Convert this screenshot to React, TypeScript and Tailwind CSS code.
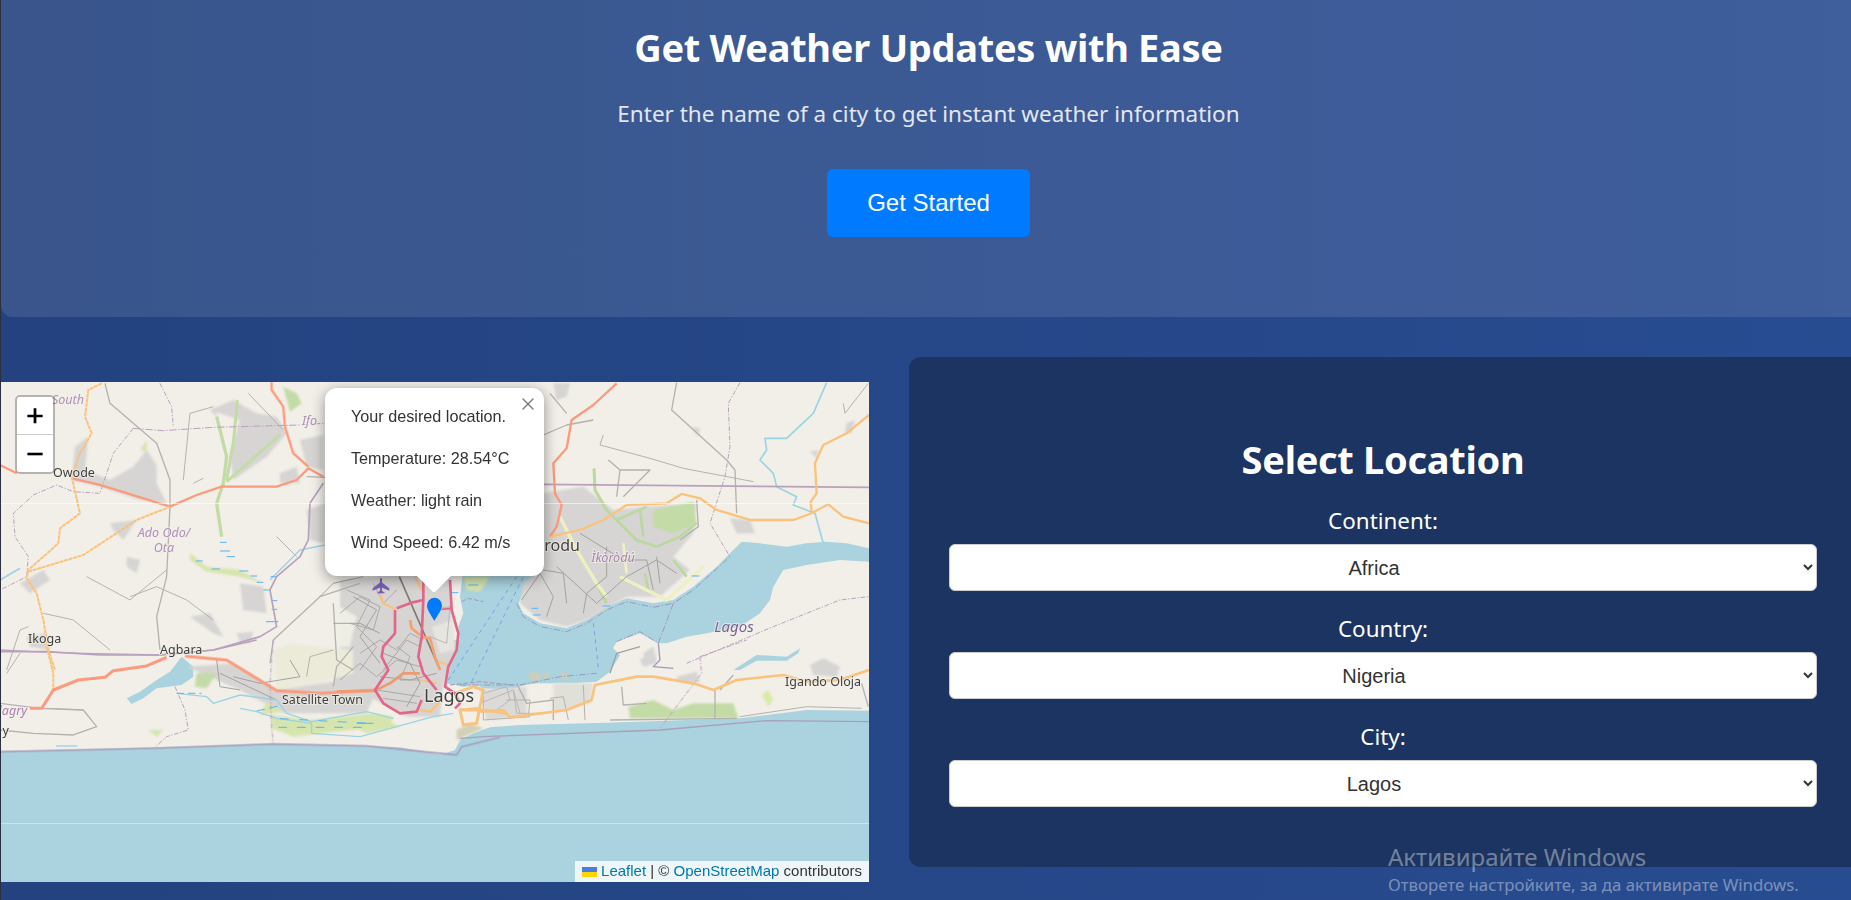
import React from 'react';
import { X } from 'lucide-react';

// map pieces were traced on 3x crops, so each tile has its own origin
const tiles = {
  a: 'translate(0 370) scale(0.3333)',
  b: 'translate(440 370) scale(0.3333)',
  c: 'translate(0 640) scale(0.3333)',
  d: 'translate(440 640) scale(0.3333)',
  e: 'translate(340 570) scale(0.3333)',
};

type Shape = {
  t: keyof typeof tiles;
  p: string;
  fill?: string;
  stroke?: string;
  w?: number;
  dash?: string;
};

const WATER = '#aad3df';
const GREY = '#d6d5d3';
const GREEN = '#c3dba6';
const MARSH = '#d5e5ad';
const PALE = '#eef0c4';
const TRUNK = '#fb9a7c';
const SECOND = '#f9c27d';
const MOTOR = '#e2668a';
const BOUND = '#b9a0bd';
const ROAD = '#b4b2ae';
const ROAD2 = '#a3a19e';
const RIVER = '#9cd3e3';
const CREEK = '#58b2f5';

const water: Shape[] = [
  { t: 'c', p: '0,335 460,322 820,312 1100,318 1200,322 1330,345 1365,345 1380,310 1500,270 1500,780 0,780', fill: WATER },
  { t: 'd', p: '45,330 60,300 100,280 150,262 240,255 500,248 900,235 1100,210 1287,212 1287,780 0,780 0,345', fill: WATER },
  { t: 'e', p: '370,0 360,80 370,130 355,170 360,220 330,290 320,340 370,350 420,345 520,350 720,320 720,185 700,190 630,170 560,150 530,110 560,50 600,0', fill: WATER },
  { t: 'b', p: '230,690 250,730 300,760 380,775 440,750 500,710 560,685 640,700 700,690 760,650 830,590 870,550 905,515 960,520 1040,530 1100,520 1160,515 1220,520 1287,535 1287,575 1200,570 1100,585 1030,600 1000,650 990,690 960,730 900,770 800,790 740,800 680,820 655,820 600,790 530,815 510,850 510,905 200,905', fill: WATER },
  { t: 'd', p: '0,0 500,0 515,20 540,45 510,95 470,125 400,130 330,130 270,130 210,150 130,145 60,110 40,80 0,90', fill: WATER },
  { t: 'c', p: '380,175 420,155 470,120 510,95 545,50 580,80 580,110 545,135 470,145 430,175 395,192', fill: WATER },
  { t: 'd', p: '880,90 950,45 1040,50 1080,25 1075,40 1040,62 950,62 900,90', fill: WATER },
];

// soft patches, drawn blurred
const areas: Shape[] = [
  { t: 'a', p: '215,330 225,230 265,200 255,300 330,330 400,290 440,240 470,285 470,340 500,400 420,390 300,350', fill: GREY },
  { t: 'a', p: '630,120 700,90 770,130 830,140 860,190 800,260 700,330 690,250 720,150', fill: GREY },
  { t: 'a', p: '330,460 410,450 370,510 340,480', fill: GREY },
  { t: 'a', p: '380,560 420,570 410,610 380,590', fill: GREY },
  { t: 'a', p: '60,640 130,600 150,630 90,670', fill: GREY },
  { t: 'a', p: '80,800 140,790 150,840 90,830', fill: GREY },
  { t: 'a', p: '720,640 790,650 800,730 730,720', fill: GREY },
  { t: 'a', p: '570,740 630,730 670,800 640,790', fill: GREY },
  { t: 'a', p: '900,210 970,195 970,300 920,290', fill: GREY },
  { t: 'a', p: '840,310 890,290 900,340 840,340', fill: GREY },
  { t: 'a', p: '920,420 975,400 975,520 930,510', fill: GREY },
  { t: 'a', p: '710,790 760,785 750,820 720,815', fill: GREY },
  { t: 'a', p: '630,120 650,110 650,140', fill: GREY },
  { t: 'e', p: '0,30 100,20 160,0 330,0 335,180 350,240 310,340 300,440 200,440 50,360 0,300', fill: GREY },
  { t: 'e', p: '0,110 50,140 30,230 0,230', fill: '#efeee5' },
  { t: 'e', p: '275,170 340,150 345,240 300,250', fill: '#e6e5e0' },
  { t: 'b', p: '310,370 430,350 520,420 620,410 770,400 760,490 700,560 750,600 660,680 560,680 440,750 380,770 300,750 240,700 250,640 310,590', fill: GREY },
  { t: 'b', p: '870,445 930,450 945,490 890,490', fill: GREY },
  { t: 'b', p: '1110,245 1135,240 1130,265', fill: GREY },
  { t: 'b', p: '1220,160 1245,150 1235,190 1215,185', fill: GREY },
  { t: 'b', p: '755,170 780,175 775,200', fill: GREY },
  { t: 'b', p: '340,40 390,40 380,80 350,90', fill: GREY },
  { t: 'b', p: '610,850 640,830 650,870 620,885', fill: GREY },
  { t: 'c', p: '560,80 700,70 830,150 1100,110 1130,150 1100,220 850,220 720,150', fill: GREY },
  { t: 'c', p: '1000,110 1130,100 1130,150 1010,155', fill: GREY },
  { t: 'c', p: '820,30 870,10 1060,30 1060,100 950,130 830,150', fill: '#ecebd9' },
  { t: 'c', p: '1060,20 1140,0 1130,130 1060,110', fill: GREY },
  { t: 'd', p: '600,60 640,30 650,70 610,80', fill: GREY },
  { t: 'd', p: '710,110 770,95 780,130 715,125', fill: GREY },
  { t: 'd', p: '1110,75 1150,55 1200,80 1190,110 1120,105', fill: GREY },
  { t: 'd', p: '50,300 130,265 90,250 50,270', fill: '#d3d0b8' },
  { t: 'd', p: '120,150 260,140 260,230 140,240', fill: '#dcdad6' },
  { t: 'd', p: '340,130 460,130 450,190 340,220', fill: '#e1e0d8' },
  { t: 'd', p: '270,95 300,100 300,122 270,122', fill: '#cfcdb8' },
  { t: 'd', p: '310,100 330,100 325,116 312,116', fill: '#cfcdb8' },
  { t: 'd', p: '360,100 385,100 385,116 360,116', fill: '#cfcdb8' },

  { t: 'a', p: '850,50 890,70 905,100 870,125', fill: GREEN },
  { t: 'a', p: '570,550 620,590 720,600 790,640 720,620 620,605 570,570', fill: MARSH },
  { t: 'a', p: '420,240 440,210 440,245', fill: MARSH },
  { t: 'b', p: '640,420 760,395 770,460 700,490 640,470', fill: GREEN },
  { t: 'c', p: '590,100 650,100 620,145 585,140', fill: GREEN },
  { t: 'c', p: '800,185 850,215 780,225', fill: MARSH },
  { t: 'c', p: '815,225 930,240 1120,220 1180,230 1170,260 1000,275 880,290 815,265', fill: MARSH },
  { t: 'c', p: '445,270 490,270 470,290', fill: MARSH },
  { t: 'd', p: '565,200 640,180 700,210 760,190 880,190 895,235 570,235', fill: GREEN },
  { t: 'd', p: '965,165 985,150 1000,180 985,200', fill: '#d9eaa9' },
  { t: 'e', p: '370,20 450,20 420,65 380,60', fill: MARSH },
  { t: 'e', p: '20,460 120,440 180,470 80,490', fill: MARSH },
];

const lines: Shape[] = [
  // green strands
  { t: 'a', p: '650,140 680,260 670,340 650,400 665,500', stroke: GREEN, w: 10 },
  { t: 'a', p: '712,90 700,220 680,330', stroke: GREEN, w: 9 },
  { t: 'a', p: '840,195 680,335', stroke: GREEN, w: 9 },
  { t: 'b', p: '462,295 465,360 500,420 530,450 590,510 650,530', stroke: '#bcd8a0', w: 9 },
  { t: 'b', p: '530,450 620,410', stroke: '#bcd8a0', w: 8 },
  { t: 'b', p: '600,420 610,500', stroke: '#bcd8a0', w: 8 },
  { t: 'b', p: '650,530 720,500 770,460', stroke: '#bcd8a0', w: 8 },
  { t: 'b', p: '470,640 500,700', stroke: '#bcd8a0', w: 10 },
  { t: 'b', p: '615,610 625,660', stroke: '#bcd8a0', w: 8 },
  { t: 'b', p: '700,570 740,620', stroke: '#bcd8a0', w: 8 },
  { t: 'b', p: '360,440 410,540 470,640 500,680', stroke: PALE, w: 10 },
  { t: 'b', p: '540,620 600,650 680,690 790,590', stroke: PALE, w: 10 },
  { t: 'b', p: '550,520 560,610', stroke: PALE, w: 8 },

  // small roads
  { t: 'a', p: '315,40 330,100 470,220 510,330 510,410 500,620 470,740 480,840', stroke: ROAD, w: 4 },
  { t: 'a', p: '260,620 390,690 500,600', stroke: ROAD, w: 3 },
  { t: 'a', p: '810,880 820,810 960,680 1080,640', stroke: ROAD, w: 4 },
  { t: 'a', p: '550,330 570,130 640,110', stroke: ROAD, w: 3 },
  { t: 'a', p: '1000,700 1010,870 1060,900', stroke: ROAD, w: 4 },
  { t: 'a', p: '920,320 975,322', stroke: ROAD, w: 4 },
  { t: 'a', p: '580,340 610,325', stroke: ROAD, w: 3 },
  { t: 'a', p: '745,70 850,180', stroke: ROAD, w: 3 },
  { t: 'a', p: '830,500 890,560', stroke: ROAD, w: 3 },
  { t: 'a', p: '390,680 470,650 560,690 640,750', stroke: ROAD, w: 3 },
  { t: 'a', p: '130,730 220,750 330,840', stroke: ROAD, w: 3 },
  { t: 'a', p: '20,900 60,780 85,770', stroke: ROAD, w: 3 },
  { t: 'a', p: '960,680 1000,640 1090,620', stroke: ROAD2, w: 3 },
  { t: 'a', p: '1060,680 1130,720 1080,800 1140,880', stroke: ROAD2, w: 3 },
  { t: 'a', p: '1000,760 1080,760 1140,790', stroke: ROAD2, w: 3 },
  { t: 'b', p: '710,38 695,120 860,270 885,300 890,430', stroke: ROAD, w: 4 },
  { t: 'b', p: '480,225 630,265 730,295 940,335', stroke: ROAD, w: 3 },
  { t: 'b', p: '480,225 490,195', stroke: ROAD, w: 3 },
  { t: 'b', p: '310,195 380,165 460,150', stroke: ROAD, w: 4 },
  { t: 'b', p: '505,270 540,300 530,380', stroke: ROAD, w: 4 },
  { t: 'b', p: '540,300 630,300 550,380', stroke: ROAD, w: 4 },
  { t: 'b', p: '770,390 775,470 720,510', stroke: ROAD, w: 4 },
  { t: 'b', p: '350,590 470,700 560,620 650,570 710,610', stroke: ROAD2, w: 3 },
  { t: 'b', p: '420,490 550,570 620,570 640,660', stroke: ROAD2, w: 3 },
  { t: 'b', p: '330,70 380,130', stroke: ROAD, w: 4 },
  { t: 'b', p: '1210,100 1215,130 1285,40', stroke: ROAD, w: 3 },
  { t: 'b', p: '310,600 370,610 380,700', stroke: ROAD2, w: 3 },
  { t: 'b', p: '245,690 300,610 340,680 320,740', stroke: ROAD2, w: 3 },
  { t: 'b', p: '500,530 500,620 440,670 430,730', stroke: ROAD2, w: 3 },
  { t: 'b', p: '650,560 660,640', stroke: ROAD2, w: 3 },
  { t: 'c', p: '0,190 120,205 250,210 290,260 220,285 100,280 0,270', stroke: ROAD, w: 4 },
  { t: 'c', p: '650,60 660,140 720,150', stroke: ROAD2, w: 3 },
  { t: 'c', p: '1060,20 1010,80 1000,140', stroke: ROAD, w: 4 },
  { t: 'c', p: '20,100 60,40', stroke: ROAD, w: 3 },
  { t: 'c', p: '250,210 140,205', stroke: ROAD, w: 3 },
  { t: 'c', p: '700,110 780,130 900,110 870,60', stroke: ROAD2, w: 3 },
  { t: 'c', p: '920,110 930,50 1000,30', stroke: ROAD, w: 3 },
  { t: 'c', p: '660,100 830,180', stroke: ROAD2, w: 3 },
  { t: 'c', p: '1140,110 1230,120 1310,100', stroke: ROAD2, w: 3 },
  { t: 'c', p: '1150,40 1230,70 1260,130 1220,200', stroke: ROAD2, w: 3 },
  { t: 'd', p: '510,240 890,235', stroke: ROAD, w: 4 },
  { t: 'd', p: '825,150 825,235', stroke: ROAD, w: 4 },
  { t: 'd', p: '545,140 550,195 620,190', stroke: ROAD, w: 4 },
  { t: 'd', p: '1265,130 1285,200', stroke: ROAD, w: 4 },
  { t: 'd', p: '840,150 880,105', stroke: ROAD, w: 4 },
  { t: 'd', p: '510,100 530,40 600,20', stroke: ROAD2, w: 4 },
  { t: 'd', p: '230,130 260,190 340,180 340,240', stroke: ROAD, w: 4 },
  { t: 'd', p: '130,150 130,240 270,230', stroke: ROAD, w: 3 },
  { t: 'd', p: '200,180 270,180 265,230', stroke: ROAD, w: 3 },
  { t: 'd', p: '330,175 370,170 385,240', stroke: ROAD, w: 3 },
  { t: 'd', p: '430,135 435,240', stroke: ROAD, w: 3 },
  { t: 'd', p: '900,230 1100,200 1265,205', stroke: ROAD, w: 3 },
  { t: 'e', p: '0,130 60,80 120,110 100,180 30,160', stroke: ROAD2, w: 2.5 },
  { t: 'e', p: '60,250 120,210 170,240 210,190 250,210', stroke: ROAD2, w: 2.5 },
  { t: 'e', p: '0,330 60,280 110,320 170,270 240,290', stroke: ROAD2, w: 2.5 },
  { t: 'e', p: '270,120 330,110 320,220 270,200', stroke: ROAD, w: 2.5 },
  { t: 'e', p: '420,400 520,360 540,430', stroke: ROAD, w: 2.5 },
  { t: 'e', p: '20,60 90,90 50,170 110,230 60,300', stroke: ROAD2, w: 2.5 },
  { t: 'e', p: '170,230 210,260 180,330 240,330', stroke: ROAD2, w: 2.5 },
  { t: 'e', p: '130,300 200,210 240,230', stroke: ROAD2, w: 2.5 },
  { t: 'e', p: '170,60 130,100 100,40', stroke: ROAD2, w: 2.5 },
  { t: 'e', p: '110,360 240,380', stroke: ROAD2, w: 2.5 },
  { t: 'e', p: '130,385 230,400', stroke: ROAD2, w: 2.5 },
  { t: 'e', p: '430,370 500,350 510,390 470,420', stroke: ROAD, w: 2.5 },
  { t: 'e', p: '520,360 530,430 620,430', stroke: ROAD, w: 2.5 },

  // rivers and creeks
  { t: 'a', p: '0,630 60,595', stroke: RIVER, w: 5 },
  { t: 'a', p: '810,630 900,540 975,525', stroke: RIVER, w: 4 },
  { t: 'b', p: '1160,38 1120,130 1040,205 975,205 980,240 960,270 1000,310 1010,350 1070,380 1060,405 1125,430 1150,520', stroke: RIVER, w: 5 },
  { t: 'c', p: '530,160 620,170 640,190 720,165 830,180 860,220 935,245 1100,215 1180,235', stroke: RIVER, w: 4 },
  { t: 'c', p: '720,205 770,215 830,235 935,250 935,280 1080,290 1190,260 1300,230 1360,220', stroke: RIVER, w: 4 },
  { t: 'c', p: '168,318 232,318', stroke: RIVER, w: 4 },
  { t: 'a', p: '660,517 680,517', stroke: CREEK, w: 3 },
  { t: 'a', p: '660,543 690,543', stroke: CREEK, w: 3 },
  { t: 'a', p: '680,560 705,560', stroke: CREEK, w: 3 },
  { t: 'a', p: '588,573 608,573', stroke: CREEK, w: 3 },
  { t: 'a', p: '635,597 660,597', stroke: CREEK, w: 3 },
  { t: 'a', p: '718,603 745,603', stroke: CREEK, w: 3 },
  { t: 'a', p: '752,618 772,618', stroke: CREEK, w: 3 },
  { t: 'a', p: '770,637 790,637', stroke: CREEK, w: 3 },
  { t: 'a', p: '790,660 812,660', stroke: CREEK, w: 3 },
  { t: 'a', p: '812,620 832,620', stroke: CREEK, w: 3 },
  { t: 'a', p: '815,692 832,692', stroke: CREEK, w: 3 },
  { t: 'a', p: '815,718 832,718', stroke: CREEK, w: 3 },
  { t: 'a', p: '798,755 835,755', stroke: CREEK, w: 3 },
  { t: 'b', p: '755,618 778,618', stroke: CREEK, w: 3 },
  { t: 'b', p: '488,708 512,708', stroke: CREEK, w: 3 },
  { t: 'b', p: '275,715 295,715', stroke: CREEK, w: 3 },
  { t: 'b', p: '278,735 302,735', stroke: CREEK, w: 3 },
  { t: 'c', p: '530,160 605,160', stroke: CREEK, w: 3, dash: '22 12' },
  { t: 'c', p: '770,213 835,198', stroke: CREEK, w: 3, dash: '25 14' },
  { t: 'c', p: '840,236 1110,250', stroke: CREEK, w: 3, dash: '26 32' },
  { t: 'c', p: '835,262 1100,262', stroke: CREEK, w: 3, dash: '26 30' },
  { t: 'e', p: '335,68 355,68', stroke: CREEK, w: 3 },
  { t: 'e', p: '385,45 415,45', stroke: CREEK, w: 3 },
  { t: 'e', p: '50,460 100,460', stroke: CREEK, w: 3 },

  // boundaries
  { t: 'a', p: '400,175 490,182 640,172 900,165 970,160', stroke: BOUND, w: 3, dash: '22 5 4 5' },
  { t: 'a', p: '400,175 340,250 300,370 220,365 170,345 100,375 40,430 45,500 85,560 80,620 0,660', stroke: BOUND, w: 3, dash: '14 5 4 5' },
  { t: 'a', p: '480,40 515,110 520,170', stroke: BOUND, w: 3, dash: '14 5 4 5' },
  { t: 'a', p: '0,845 140,845 300,855 480,855 640,840 780,800 830,770 810,660 830,620 900,560 925,510 930,400 970,340', stroke: BOUND, w: 5 },
  { t: 'b', p: '310,343 1287,352', stroke: BOUND, w: 5 },
  { t: 'b', p: '900,38 865,100 870,230 855,320 810,460 870,560', stroke: BOUND, w: 3, dash: '14 5 4 5' },
  { t: 'b', p: '740,880 1000,770 1200,690 1287,680', stroke: BOUND, w: 3, dash: '14 5 4 5' },
  { t: 'b', p: '230,700 250,740 300,770 380,785 440,760 500,720 560,695 640,712 700,700 760,660 870,560', stroke: '#9c9ab8', w: 3, dash: '20 6 4 6' },
  { t: 'b', p: '700,700 655,820 600,785 530,815', stroke: '#a29ab8', w: 3, dash: '20 6 4 6' },
  { t: 'b', p: '655,820 660,870 640,890 700,895', stroke: '#9c9ab8', w: 4 },
  { t: 'b', p: '460,760 465,800 475,895', stroke: '#7c9ee8', w: 3, dash: '12 12' },
  { t: 'c', p: '525,140 555,210 565,270 500,290 465,322', stroke: BOUND, w: 3, dash: '14 5 4 5' },
  { t: 'c', p: '820,0 810,130 815,260 820,310', stroke: BOUND, w: 3, dash: '14 5 4 5' },
  { t: 'c', p: '0,30 100,35 250,40 480,45 640,30 770,0', stroke: BOUND, w: 4 },
  { t: 'c', p: '0,335 460,325 820,312 1100,318 1370,345 1385,320 1500,292', stroke: '#a99fbc', w: 5 },
  { t: 'd', p: '60,295 130,290 660,270 980,242 1287,245', stroke: '#a99fbc', w: 4 },
  { t: 'd', p: '780,50 920,0', stroke: BOUND, w: 3, dash: '14 5 4 5' },
  { t: 'd', p: '780,50 785,100 660,265', stroke: BOUND, w: 3, dash: '14 5 4 5' },
  { t: 'd', p: '60,135 240,135 360,110 470,100', stroke: '#9c9ab8', w: 3, dash: '20 6 4 6' },
  { t: 'e', p: '365,95 385,85 430,95', stroke: '#9c9ab8', w: 3, dash: '14 6' },
  { t: 'e', p: '330,345 420,335 520,345', stroke: '#9c9ab8', w: 3, dash: '14 6' },
  { t: 'e', p: '325,330 530,20', stroke: '#7c9ee8', w: 3, dash: '12 12' },
  { t: 'e', p: '395,335 550,20', stroke: '#7c9ee8', w: 3, dash: '12 12' },

  // main roads
  { t: 'e', p: '178,20 300,300', stroke: '#85786f', w: 5 },
  { t: 'a', p: '0,285 50,310', stroke: TRUNK, w: 7 },
  { t: 'a', p: '215,325 300,345 510,410 590,375 665,350 760,350 830,350 890,330 925,295 970,320', stroke: TRUNK, w: 7 },
  { t: 'a', p: '925,290 880,250 855,170 850,110 815,60 815,37', stroke: TRUNK, w: 7 },
  { t: 'a', p: '305,40 265,60 255,140 275,190 240,250 215,320 240,430 180,475 175,520 85,600 80,625 110,670 130,750 145,840 165,900', stroke: SECOND, w: 6, dash: '12 2' },
  { t: 'a', p: '85,605 250,555 410,450 510,410', stroke: SECOND, w: 6, dash: '12 2' },
  { t: 'b', p: '530,40 460,105 395,150 380,235 340,280 345,370 365,405 350,470 330,500', stroke: TRUNK, w: 7 },
  { t: 'b', p: '330,500 420,480 490,450 560,405 680,400 725,372 780,385 830,420 930,450 1060,450 1110,432 1165,403 1210,440 1287,460', stroke: SECOND, w: 7 },
  { t: 'b', p: '1287,135 1220,190 1150,225 1125,280 1130,370 1112,395 1115,425', stroke: SECOND, w: 7 },
  { t: 'c', p: '140,20 160,100 160,150', stroke: SECOND, w: 6, dash: '12 2' },
  { t: 'c', p: '90,205 125,205 160,150 235,120 315,112 340,92 440,78 500,52', stroke: TRUNK, w: 9 },
  { t: 'c', p: '555,48 680,60 830,152 960,160 1130,150', stroke: TRUNK, w: 9 },
  { t: 'd', p: '60,210 110,205 125,215 190,210 210,232 380,210 455,180 465,135 590,110 640,110 760,130 820,150 890,120 1030,105 1100,125 1200,120 1287,90', stroke: SECOND, w: 8 },
  { t: 'e', p: '-10,365 105,362 150,340 190,310 240,310', stroke: '#f09a72', w: 8 },
  { t: 'e', p: '210,150 215,175 240,195', stroke: '#f5a06f', w: 8 },
  { t: 'e', p: '245,200 270,205 285,260 300,300', stroke: '#f5a06f', w: 8 },
  { t: 'e', p: '120,70 130,100 165,118', stroke: SECOND, w: 7 },
  { t: 'e', p: '225,20 245,60', stroke: SECOND, w: 7 },
  { t: 'e', p: '345,370 400,350 430,360 410,460 370,465 360,420 430,420 500,430', stroke: SECOND, w: 9 },
  { t: 'e', p: '240,330 290,340', stroke: SECOND, w: 6 },
  { t: 'e', p: '240,420 270,425 300,395', stroke: SECOND, w: 7 },
  { t: 'e', p: '295,275 325,285', stroke: SECOND, w: 6 },
  { t: 'e', p: '250,0 250,90 245,200 235,260 250,310 290,360', stroke: MOTOR, w: 8 },
  { t: 'e', p: '170,115 215,98 250,90', stroke: MOTOR, w: 8 },
  { t: 'e', p: '330,30 335,120 355,190 350,240 325,290 315,350 345,370 360,400 345,415', stroke: MOTOR, w: 8 },
  { t: 'e', p: '165,120 165,190 130,230 125,260 145,300 105,360 130,400 180,430 230,425 245,390', stroke: MOTOR, w: 8 },
  { t: 'e', p: '305,118 335,115', stroke: MOTOR, w: 5 },
];

const MapLabel = ({ x, y, size = 12.5, fill = '#3f3f3f', anchor = 'start', italic = false, children }: {
  x: number;
  y: number;
  size?: number;
  fill?: string;
  anchor?: 'start' | 'middle' | 'end';
  italic?: boolean;
  children: string;
}) => (
  <text
    x={x}
    y={y}
    fontSize={size}
    fill={fill}
    textAnchor={anchor}
    fontStyle={italic ? 'italic' : 'normal'}
    stroke="#f2efe9"
    strokeOpacity={0.7}
    strokeWidth={2}
    paintOrder="stroke"
    className='font-["Noto_Sans",sans-serif]'
  >
    {children}
  </text>
);

const TileMap = () => (
  <svg viewBox="1 382 868 500" className="block w-full h-full blur-[0.4px]">
    <rect x="0" y="380" width="870" height="504" fill="#f2efe9" />
    {water.map((s, i) => (
      <polygon key={i} transform={tiles[s.t]} points={s.p} fill={s.fill} />
    ))}
    <g className="blur-[1px]">
      {areas.map((s, i) => (
        <polygon key={i} transform={tiles[s.t]} points={s.p} fill={s.fill} />
      ))}
    </g>
    {lines.map((s, i) => (
      <polyline
        key={i}
        transform={tiles[s.t]}
        points={s.p}
        fill="none"
        stroke={s.stroke}
        strokeWidth={s.w}
        strokeDasharray={s.dash}
        strokeLinejoin="round"
      />
    ))}
    {/* seams between map tiles */}
    <line x1="0" x2="870" y1="503.5" y2="503.5" stroke="#fff" strokeOpacity="0.6" />
    <line x1="0" x2="870" y1="823.5" y2="823.5" stroke="#fff" strokeOpacity="0.4" />
    {/* airport */}
    <g transform="translate(0 370) scale(0.3333)" fill="#7a5fb8">
      <rect x="1140" y="625" width="6" height="45" />
      <polygon points="1143,635 1168,655 1168,662 1143,652 1118,662 1118,655" />
      <polygon points="1130,670 1143,660 1156,670" />
    </g>
    <MapLabel x={52} y={404} fill="#b08fb8" italic>South</MapLabel>
    <MapLabel x={302} y={425} fill="#b08fb8" italic>Ifo</MapLabel>
    <MapLabel x={53} y={477}>Owode</MapLabel>
    <MapLabel x={164} y={537} anchor="middle" fill="#b08fb8" italic>Ado Odo/</MapLabel>
    <MapLabel x={164} y={552} anchor="middle" fill="#b08fb8" italic>Ota</MapLabel>
    <MapLabel x={28} y={643}>Ikoga</MapLabel>
    <MapLabel x={160} y={654}>Agbara</MapLabel>
    <MapLabel x={282} y={704}>Satellite Town</MapLabel>
    <MapLabel x={424} y={702} size={18}>Lagos</MapLabel>
    <MapLabel x={785} y={686}>Igando Oloja</MapLabel>
    <MapLabel x={580} y={551} size={16} anchor="end">Ikorodu</MapLabel>
    <MapLabel x={613} y={562} anchor="middle" fill="#a683b0" italic>Ìkòròdú</MapLabel>
    <MapLabel x={734} y={632} size={15} anchor="middle" fill="#7d5f92" italic>Lagos</MapLabel>
    <MapLabel x={27} y={715} anchor="end" fill="#a683b0" italic>Badagry</MapLabel>
    <MapLabel x={9} y={735} anchor="end">y</MapLabel>
    {/* marker */}
    <path
      transform="translate(340 570) scale(0.3333)"
      d="M283,153 C270,130 261,120 261,106 A22.5,22.5 0 0 1 306,106 C306,120 296,130 283,153Z"
      fill="#007bff"
    />
  </svg>
);

const Field = ({ label, value }: { label: string; value: string }) => (
  <div className="flex flex-col">
    <label className="text-[22.4px] leading-[30px] text-white text-center mb-[8px]">{label}</label>
    <select
      defaultValue={value}
      className='h-[47px] w-full rounded-[6px] border border-[#ccc] bg-white pr-[6px] text-center text-[20px] text-[#333] font-["Liberation_Sans",Arial,sans-serif]'
    >
      <option>{value}</option>
    </select>
  </div>
);

const App: React.FC = () => {
  return (
    <div className='relative h-[900px] overflow-hidden border-l border-[#2b2f3f] bg-linear-to-r from-[#23427f] to-[#284c91] font-["Noto_Sans",sans-serif]'>
      <header className="h-[317px] rounded-bl-[12px] bg-white/10 pl-[5px] pt-[19px] flex flex-col items-center">
        <h1 className="text-[38px] leading-[56px] font-bold text-white tracking-[-0.3px]">Get Weather Updates with Ease</h1>
        <p className="mt-[24px] text-[22.5px] leading-[30px] text-[#e3e6ee]">
          Enter the name of a city to get instant weather information
        </p>
        <button className='mt-[40px] h-[68px] w-[203px] rounded-[6px] bg-[#007bff] text-[24px] text-white font-["Liberation_Sans",Arial,sans-serif]'>
          Get Started
        </button>
      </header>

      <div className="flex items-start gap-[40px]">
        {/* map */}
        <div className="relative mt-[65px] h-[500px] w-[868px] shrink-0 overflow-hidden bg-[#f2efe9]">
          <TileMap />

          <div className='absolute left-[14px] top-[13px] w-[40px] rounded-[5px] border-2 border-black/25 bg-clip-padding text-black font-["Liberation_Sans",sans-serif]'>
            <div className="flex h-[38px] items-center justify-center rounded-t-[3px] border-b border-[#ccc] bg-white text-[30px] leading-none [-webkit-text-stroke:0.5px_#000]">+</div>
            <div className="flex h-[37px] items-center justify-center rounded-b-[3px] bg-white text-[30px] leading-none [-webkit-text-stroke:0.5px_#000]">−</div>
          </div>

          <div className='absolute left-[324px] top-[6px] w-[219px] h-[188px] rounded-[12px] bg-white shadow-[0_3px_14px_rgba(0,0,0,0.4)] pl-[26px] pt-[18px] text-[16.2px] leading-[20px] text-[#333] font-["Liberation_Sans",Arial,sans-serif]'>
            <X className="absolute right-[6px] top-[6px] text-[#757575]" size={20} strokeWidth={1.5} />
            <p className="mb-[22px]">Your desired location.</p>
            <p className="mb-[22px]">Temperature: 28.54°C</p>
            <p className="mb-[22px]">Weather: light rain</p>
            <p>Wind Speed: 6.42 m/s</p>
          </div>
          <div className="absolute left-[413px] top-[194px] h-[16px] w-[40px] overflow-hidden">
            <div className="mx-auto -mt-[12px] h-[24px] w-[24px] rotate-45 bg-white" />
          </div>

          <div className='absolute bottom-0 right-0 flex h-[21px] items-center bg-white/80 pl-[7px] pr-[7px] text-[15px] text-[#333] font-["Liberation_Sans",Arial,sans-serif]'>
            <svg width="15" height="10" viewBox="0 0 15 10" className="mr-[4px]">
              <rect width="15" height="5" fill="#4C7BE1" />
              <rect y="5" width="15" height="5" fill="#FFD500" />
            </svg>
            <span className="text-[#0078a8]">Leaflet</span>
            <span className="whitespace-pre"> | © </span>
            <span className="text-[#0078a8]">OpenStreetMap</span>
            <span className="whitespace-pre"> contributors</span>
          </div>
        </div>

        {/* location form */}
        <section className="mt-[40px] h-[510px] flex-1 rounded-l-[12px] bg-[#1b3461] pl-[40px] pr-[34px] pt-[76px]">
          <h2 className="mb-[21px] text-center text-[38px] leading-[52px] font-bold text-white tracking-[-0.3px]">Select Location</h2>
          <div className="flex flex-col gap-[23px]">
            <Field label="Continent:" value="Africa" />
            <Field label="Country:" value="Nigeria" />
            <Field label="City:" value="Lagos" />
          </div>
        </section>
      </div>

      {/* windows watermark */}
      <div className="absolute left-[1387px] top-[841px] text-white/40">
        <div className="text-[24px] leading-[32px]">Активирайте Windows</div>
        <div className="text-[16.8px] leading-[24px]">Отворете настройките, за да активирате Windows.</div>
      </div>
    </div>
  );
};

export default App;
